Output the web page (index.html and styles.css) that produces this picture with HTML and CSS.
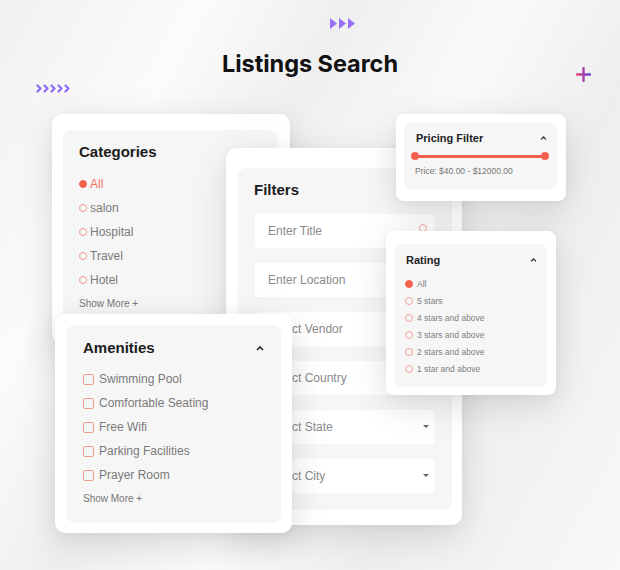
FILE: index.html
```html
<!DOCTYPE html>
<html>
<head>
<meta charset="utf-8">
<link rel="stylesheet" href="styles.css">
</head>
<body>
<div class="stage">
  <header class="head">
    <div class="tri-row">
      <svg width="26" height="11" viewBox="0 0 26 11"><path d="M0 0 L7 5.5 L0 11Z M9 0 L16 5.5 L9 11Z M18 0 L25 5.5 L18 11Z" fill="#9a6ff6"/></svg>
    </div>
    <h1 class="title">Listings Search</h1>
  </header>

  <svg class="deco-chev" width="34" height="9" viewBox="0 0 34 9"><g fill="none" stroke="#8f6af5" stroke-width="2.2" stroke-linecap="round" stroke-linejoin="round"><path d="M1.5 1.5 L4.5 4.5 L1.5 7.5"/><path d="M8.5 1.5 L11.5 4.5 L8.5 7.5"/><path d="M15.5 1.5 L18.5 4.5 L15.5 7.5"/><path d="M22.5 1.5 L25.5 4.5 L22.5 7.5"/><path d="M29.5 1.5 L32.5 4.5 L29.5 7.5"/></g></svg>
  <svg class="deco-plus" width="15" height="15" viewBox="0 0 15 15"><defs><linearGradient id="pg" x1="0" x2="1" y1="0" y2="0"><stop offset="0" stop-color="#e0457f"/><stop offset="1" stop-color="#6a3fd6"/></linearGradient></defs><path d="M7.5 1 V14 M1 7.5 H14" stroke="url(#pg)" stroke-width="2.4" stroke-linecap="round"/></svg>

  <section class="card card-cat">
    <div class="panel panel-cat">
      <h2 class="h-lg">Categories</h2>
      <ul class="cat-list">
        <li class="cat-item active"><span class="dot filled"></span>All</li>
        <li class="cat-item"><span class="dot"></span>salon</li>
        <li class="cat-item"><span class="dot"></span>Hospital</li>
        <li class="cat-item"><span class="dot"></span>Travel</li>
        <li class="cat-item"><span class="dot"></span>Hotel</li>
      </ul>
      <div class="more">Show More +</div>
    </div>
  </section>

  <section class="card card-filters">
    <div class="panel panel-filters">
      <h2 class="h-lg">Filters</h2>
      <div class="fields">
        <div class="field">Enter Title<span class="f-ring"></span></div>
        <div class="field">Enter Location</div>
        <div class="field">Select Vendor<span class="caret-down"></span></div>
        <div class="field">Select Country<span class="caret-down"></span></div>
        <div class="field">Select State<span class="caret-down"></span></div>
        <div class="field">Select City<span class="caret-down"></span></div>
      </div>
    </div>
  </section>

  <section class="card card-amen">
    <div class="panel panel-amen">
      <div class="h-row">
        <h2 class="h-lg">Amenities</h2>
        <svg class="up" width="8" height="5" viewBox="0 0 8 5"><path d="M1 4 L4 1 L7 4" fill="none" stroke="#222" stroke-width="1.6"/></svg>
      </div>
      <ul class="amen-list">
        <li class="amen-item"><span class="box"></span>Swimming Pool</li>
        <li class="amen-item"><span class="box"></span>Comfortable Seating</li>
        <li class="amen-item"><span class="box"></span>Free Wifi</li>
        <li class="amen-item"><span class="box"></span>Parking Facilities</li>
        <li class="amen-item"><span class="box"></span>Prayer Room</li>
      </ul>
      <div class="more">Show More +</div>
    </div>
  </section>

  <section class="card card-price">
    <div class="panel panel-price">
      <div class="h-row">
        <h3 class="h-sm">Pricing Filter</h3>
        <svg class="up" width="7" height="4" viewBox="0 0 7 4"><path d="M1 3.4 L3.5 1 L6 3.4" fill="none" stroke="#333" stroke-width="1.3"/></svg>
      </div>
      <div class="slider"><span class="knob"></span><span class="track"></span><span class="knob"></span></div>
      <div class="price">Price: $40.00 - $12000.00</div>
    </div>
  </section>

  <section class="card card-rate">
    <div class="panel panel-rate">
      <div class="h-row">
        <h3 class="h-sm">Rating</h3>
        <svg class="up" width="7" height="4" viewBox="0 0 7 4"><path d="M1 3.4 L3.5 1 L6 3.4" fill="none" stroke="#333" stroke-width="1.3"/></svg>
      </div>
      <ul class="rate-list">
        <li class="rate-item"><span class="radio on"></span>All</li>
        <li class="rate-item"><span class="radio"></span>5 stars</li>
        <li class="rate-item"><span class="radio"></span>4 stars and above</li>
        <li class="rate-item"><span class="radio"></span>3 stars and above</li>
        <li class="rate-item"><span class="radio"></span>2 stars and above</li>
        <li class="rate-item"><span class="radio"></span>1 star and above</li>
      </ul>
    </div>
  </section>
</div>
</body>
</html>
```
FILE: styles.css
```css
* { box-sizing: border-box; }
html, body { margin: 0; padding: 0; }
body {
  width: 620px;
  height: 570px;
  overflow: hidden;
  font-family: "Liberation Sans", Arial, sans-serif;
  background: linear-gradient(118deg, #f1f1f1 0%, #fbfbfb 22%, #efefef 38%, #fafafa 55%, #eeeeee 72%, #f8f8f8 100%);
}
.stage { position: relative; width: 620px; height: 570px; }

.head { display: flex; flex-direction: column; align-items: center; padding-top: 18px; }
.tri-row { width: 100%; padding-left: 330px; height: 11px; display: flex; }
.title {
  margin: 21px 0 0;
  font-family: Inter, "Liberation Sans", sans-serif;
  font-weight: 700;
  font-size: 23.5px;
  line-height: 28px;
  color: #111;
  letter-spacing: -0.05px;
}

.deco-chev { position: absolute; left: 36px; top: 84px; }
.deco-plus { position: absolute; left: 576px; top: 67px; }

.card {
  position: absolute;
  background: #fff;
  border-radius: 10px;
  box-shadow: 0 10px 36px rgba(0,0,0,0.13), 0 2px 8px rgba(0,0,0,0.04);
}
.panel { background: #f6f6f6; border-radius: 8px; height: 100%; }

.card-cat { left: 52px; top: 114px; width: 238px; height: 230px; padding: 16px 13px 12px 11px; }
.panel-cat { padding: 13px 16px 0; }
.card-filters { left: 226px; top: 148px; width: 236px; height: 377px; padding: 20px 10px 15px 12px; }
.panel-filters { padding: 13px 18px 0 16px; }
.card-amen { left: 55px; top: 314px; width: 237px; height: 219px; padding: 11px 11px 10px 12px; }
.panel-amen { padding: 14px 17px 0 16px; }
.card-price { left: 396px; top: 114px; width: 170px; height: 87px; padding: 8px 9px 11px 8px; border-radius: 8px; }
.panel-price { padding: 9px 10px 0 12px; }
.card-rate { left: 386px; top: 231px; width: 170px; height: 164px; padding: 13px 9px 8px 8px; border-radius: 8px; }
.panel-rate { padding: 9px 10px 0 12px; }

.h-lg { margin: 0; font-size: 15px; line-height: 18px; font-weight: 700; color: #1c1c1c; }
.h-sm { margin: 0; font-size: 11px; line-height: 14px; font-weight: 700; color: #222; }
.h-row { display: flex; align-items: center; justify-content: space-between; }

ul { list-style: none; margin: 0; padding: 0; }

.cat-list { margin-top: 11px; }
.cat-item { display: flex; align-items: center; height: 24px; font-size: 12px; color: #7a7a7a; }
.cat-item.active { color: #f4705e; }
.dot { width: 8px; height: 8px; border-radius: 50%; border: 1.5px solid #f09b90; margin-right: 3px; }
.dot.filled { background: #f4604c; border-color: #f4604c; }
.more { font-size: 10px; line-height: 14px; color: #777; margin-top: 5px; }

.fields { margin-top: 15px; display: flex; flex-direction: column; gap: 15px; margin-left: 1px; }
.field {
  position: relative;
  height: 34px;
  background: #fff;
  border-radius: 3px;
  display: flex;
  align-items: center;
  padding-left: 13px;
  font-size: 12px;
  color: #8a8a8a;
}
.f-ring { position: absolute; right: 7px; top: 10px; width: 8px; height: 8px; border-radius: 50%; border: 1.2px solid #f3a89e; }
.caret-down { position: absolute; right: 5px; top: 15px; width: 0; height: 0; border-left: 3px solid transparent; border-right: 3px solid transparent; border-top: 3.5px solid #666; }

.amen-list { margin-top: 10px; }
.amen-item { display: flex; align-items: center; height: 24px; font-size: 12px; color: #7a7a7a; }
.box { width: 11px; height: 11px; border: 1px solid #f29a8c; border-radius: 2px; margin-right: 5px; flex: none; }
.panel-amen .more { margin-top: 5px; }

.slider { display: flex; align-items: center; margin: 6px 0 0 -5px; width: 138px; height: 10px; }
.knob { width: 8px; height: 8px; border-radius: 50%; background: #f4604c; flex: none; }
.track { flex: 1; height: 3px; background: #f4604c; margin: 0 -1px; }
.price { font-size: 8.5px; line-height: 12px; color: #777; margin-top: 4px; margin-left: -1px; }

.rate-list { margin-top: 8px; }
.rate-item { display: flex; align-items: center; height: 17px; font-size: 8.5px; color: #7e7e7e; }
.radio { width: 8px; height: 8px; border-radius: 50%; border: 1.2px solid #f2a296; margin: 0 4px 0 -1px; flex: none; }
.radio.on { background: #f4604c; border-color: #f4604c; }
```
